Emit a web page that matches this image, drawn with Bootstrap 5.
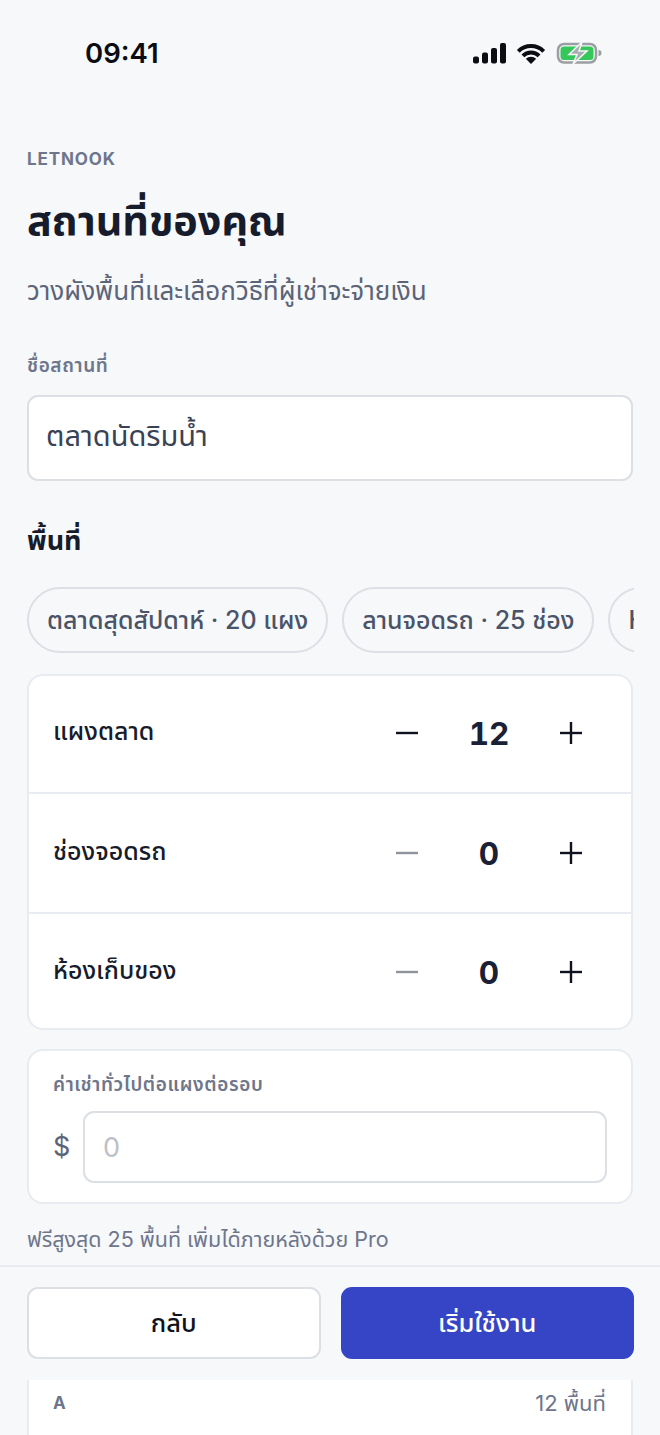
<!DOCTYPE html>
<html lang="th">
<head>
    <meta charset="UTF-8">
    <meta name="viewport" content="width=device-width, initial-scale=1.0">
    <title>Letnook - สถานที่ของคุณ</title>
    <link href="https://cdn.jsdelivr.net/npm/bootstrap@5.3.0/dist/css/bootstrap.min.css" rel="stylesheet">
    <style>
        html, body {
            height: 1435px;
            overflow: hidden;
        }
        body {
            background-color: #f6f8fa;
            font-family: "Inter", "Noto Sans", "Noto Sans Thai", sans-serif;
            color: #171c2c;
        }
        .phone-page {
            width: 660px;
            height: 1435px;
            overflow: hidden;
        }
        .status-bar {
            height: 106px;
            padding: 34px 58px 0 85px;
        }
        .status-time {
            font-size: 27.5px;
            font-weight: 600;
            line-height: 38px;
            color: #0b0d12;
        }
        .setup-body {
            padding: 0 27px;
        }
        .brand-line {
            font-size: 17px;
            line-height: 24px;
            font-weight: 700;
            letter-spacing: 0.9px;
            color: #6e768c;
            margin-top: 41px;
        }
        .page-heading {
            font-size: 41.3px;
            line-height: 50px;
            font-weight: 700;
            margin: 24px 0 0;
            color: #171c2c;
        }
        .page-sub {
            font-size: 26px;
            line-height: 34px;
            color: #5b6478;
            margin: 29px 0 0;
        }
        .field-label {
            font-size: 19px;
            line-height: 24px;
            font-weight: 600;
            letter-spacing: 0.6px;
            color: #6e768c;
            margin: 0;
        }
        .name-label {
            margin-top: 46px;
        }
        .rent-label {
            margin-bottom: 14px;
        }
        .name-input.form-control {
            height: 86px;
            font-size: 29px;
            color: #3a4256;
            padding: 0 17px 2px;
            border: 2px solid #dcdfe4;
            border-radius: 11px;
            margin-top: 17px;
        }
        .section-title {
            font-size: 27px;
            line-height: 40px;
            font-weight: 700;
            margin: 40px 0 0;
        }
        .chip-row {
            gap: 14px;
            margin-top: 26px;
            width: 607px;
            overflow: hidden;
        }
        .chip-pill {
            flex: none;
            height: 66px;
            padding: 0 18px;
            font-size: 25px;
            font-weight: 500;
            line-height: 62px;
            color: #4a5468;
            background: #f6f8fa;
            border: 2px solid #dcdfe4;
            border-radius: 33px;
            white-space: nowrap;
        }
        .count-panel {
            background: #fff;
            border: 2px solid #e8ebf0;
            border-radius: 16px;
            margin-top: 21px;
        }
        .count-row {
            height: 116px;
            padding: 0 40px 0 24px;
        }
        .count-row + .count-row {
            border-top: 2px solid #e8ebf0;
        }
        .count-row-first {
            padding-bottom: 2px;
        }
        .count-row-mid {
            height: 120px;
        }
        .count-row-last {
            padding-top: 2px;
        }
        .count-name {
            font-size: 25px;
            font-weight: 500;
            padding-bottom: 2px;
            color: #171c2c;
        }
        .count-stepper {
            width: 204px;
        }
        .step-mark {
            width: 40px;
            height: 40px;
            padding: 0;
            border: 0;
            background: none;
            line-height: 0;
        }
        .step-mark line {
            stroke: #0f1320;
            stroke-width: 2.4;
        }
        .step-mark.is-off line {
            stroke: #8f939c;
        }
        .count-value {
            font-size: 31.5px;
            font-weight: 700;
            font-variant-numeric: tabular-nums;
            padding-top: 2px;
            color: #1a2036;
        }
        .rent-panel {
            background: #fff;
            border: 2px solid #e8ebf0;
            border-radius: 16px;
            margin-top: 19px;
            padding: 22px 24px 19px;
        }
        .dollar-sign {
            flex: none;
            font-size: 27px;
            color: #5b6478;
            width: 30px;
        }
        .rent-input.form-control {
            height: 72px;
            font-size: 27px;
            padding: 0 18px;
            border: 2px solid #dcdfe4;
            border-radius: 11px;
        }
        .rent-input.form-control::placeholder {
            color: #bcc0c7;
        }
        .limit-note {
            font-size: 21.5px;
            line-height: 30px;
            color: #6e768c;
            margin: 20px 0 0;
        }
        .action-bar {
            background: #f6f8fa;
            border-top: 2px solid #e8ebf0;
            margin-top: 11px;
            height: 115px;
            padding: 20px 26px 0 27px;
            gap: 20px;
        }
        .action-btn.btn {
            flex: 1 1 0;
            height: 72px;
            font-size: 25.5px;
            font-weight: 500;
            border-radius: 11px;
        }
        .btn-back.btn {
            background: #fff;
            border: 2px solid #dcdfe4;
            color: #0f1320;
        }
        .btn-start.btn {
            background: #3545c6;
            border: 2px solid #3545c6;
            color: #fff;
        }
        .peek-panel {
            background: #fff;
            margin: 0 27px;
            height: 60px;
            border: 2px solid #e8ebf0;
            border-top: 0;
            padding: 6px 25px 0 24px;
            line-height: 34px;
        }
        .peek-letter {
            font-size: 17px;
            font-weight: 700;
            color: #6e768c;
        }
        .peek-count {
            font-size: 22px;
            color: #6e768c;
        }
    </style>
</head>
<body>
    <div class="phone-page">
        <div class="status-bar d-flex justify-content-between align-items-start">
            <span class="status-time">09:41</span>
            <svg width="130" height="28" viewBox="0 0 130 28" class="mt-1">
                <rect x="1" y="18.500" width="6" height="7" rx="2" fill="#0b0d12"/>
                <rect x="10" y="14.500" width="6" height="11" rx="2" fill="#0b0d12"/>
                <rect x="19" y="10" width="6" height="15.500" rx="2" fill="#0b0d12"/>
                <rect x="28" y="5" width="6" height="20.500" rx="2" fill="#0b0d12"/>
                <path d="M46.300 13.300a18 18 0 0 1 25.400 0M50.900 17.900a11.500 11.500 0 0 1 16.200 0" fill="none" stroke="#0b0d12" stroke-width="4"/>
                <path d="M59 26l-5.200-5.200a7.400 7.400 0 0 1 10.400 0z" fill="#0b0d12"/>
                <rect x="86" y="6" width="38" height="18.500" rx="6" fill="none" stroke="#9b9ea3" stroke-width="2.500"/>
                <rect x="88.500" y="8.500" width="33" height="13.500" rx="3.500" fill="#35c759"/>
                <path d="M126.500 12v6a3 3 0 0 0 0-6z" fill="#9b9ea3"/>
                <path d="M110 4l-13 12.500h8l-4 9.500 14-13h-8z" fill="#a9acb1" stroke="#f6f8fa" stroke-width="1.500"/>
            </svg>
        </div>
        <div class="setup-body">
            <div class="brand-line">LETNOOK</div>
            <h1 class="page-heading">สถานที่ของคุณ</h1>
            <p class="page-sub">วางผังพื้นที่และเลือกวิธีที่ผู้เช่าจะจ่ายเงิน</p>
            <p class="field-label name-label">ชื่อสถานที่</p>
            <input type="text" class="form-control name-input" value="ตลาดนัดริมน้ำ">
            <h2 class="section-title">พื้นที่</h2>
            <div class="chip-row d-flex">
                <span class="chip-pill">ตลาดสุดสัปดาห์ · 20 แผง</span>
                <span class="chip-pill">ลานจอดรถ · 25 ช่อง</span>
                <span class="chip-pill">Hall · 10</span>
            </div>
            <div class="count-panel">
                <div class="count-row count-row-first d-flex justify-content-between align-items-center">
                    <span class="count-name">แผงตลาด</span>
                    <div class="count-stepper d-flex justify-content-between align-items-center">
                        <button class="step-mark"><svg width="40" height="40" viewBox="0 0 40 40"><line x1="9" y1="20" x2="31" y2="20"/></svg></button>
                        <span class="count-value">12</span>
                        <button class="step-mark"><svg width="40" height="40" viewBox="0 0 40 40"><line x1="9" y1="20" x2="31" y2="20"/><line x1="20" y1="9" x2="20" y2="31"/></svg></button>
                    </div>
                </div>
                <div class="count-row count-row-mid d-flex justify-content-between align-items-center">
                    <span class="count-name">ช่องจอดรถ</span>
                    <div class="count-stepper d-flex justify-content-between align-items-center">
                        <button class="step-mark is-off"><svg width="40" height="40" viewBox="0 0 40 40"><line x1="9" y1="20" x2="31" y2="20"/></svg></button>
                        <span class="count-value">0</span>
                        <button class="step-mark"><svg width="40" height="40" viewBox="0 0 40 40"><line x1="9" y1="20" x2="31" y2="20"/><line x1="20" y1="9" x2="20" y2="31"/></svg></button>
                    </div>
                </div>
                <div class="count-row count-row-last d-flex justify-content-between align-items-center">
                    <span class="count-name">ห้องเก็บของ</span>
                    <div class="count-stepper d-flex justify-content-between align-items-center">
                        <button class="step-mark is-off"><svg width="40" height="40" viewBox="0 0 40 40"><line x1="9" y1="20" x2="31" y2="20"/></svg></button>
                        <span class="count-value">0</span>
                        <button class="step-mark"><svg width="40" height="40" viewBox="0 0 40 40"><line x1="9" y1="20" x2="31" y2="20"/><line x1="20" y1="9" x2="20" y2="31"/></svg></button>
                    </div>
                </div>
            </div>
            <div class="rent-panel">
                <p class="field-label rent-label">ค่าเช่าทั่วไปต่อแผงต่อรอบ</p>
                <div class="d-flex align-items-center">
                    <span class="dollar-sign">$</span>
                    <input type="text" class="form-control rent-input" placeholder="0">
                </div>
            </div>
            <p class="limit-note">ฟรีสูงสุด 25 พื้นที่ เพิ่มได้ภายหลังด้วย Pro</p>
        </div>
        <div class="action-bar d-flex align-items-start">
            <button class="btn action-btn btn-back">กลับ</button>
            <button class="btn action-btn btn-start">เริ่มใช้งาน</button>
        </div>
        <div class="peek-panel d-flex justify-content-between align-items-start">
            <span class="peek-letter">A</span>
            <span class="peek-count">12 พื้นที่</span>
        </div>
    </div>
    <script src="https://cdn.jsdelivr.net/npm/bootstrap@5.3.0/dist/js/bootstrap.bundle.min.js"></script>
</body>
</html>
